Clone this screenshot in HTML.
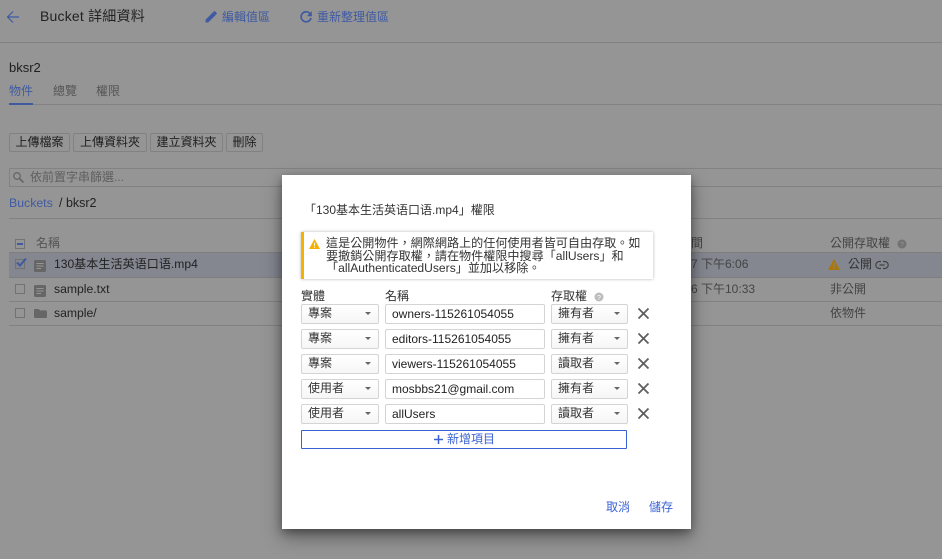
<!DOCTYPE html>
<html lang="zh-Hant">
<head>
<meta charset="utf-8">
<title>Bucket 詳細資料</title>
<style>
html,body{margin:0;padding:0}
body{width:942px;height:559px;overflow:hidden;position:relative;background:#959595;font-family:"Liberation Sans","Noto Sans CJK TC",sans-serif;font-size:12px;color:#222}
.bg{position:absolute;left:0;top:0;width:942px;height:559px;filter:blur(.35px)}
.a{position:absolute;white-space:nowrap}
.l{position:absolute;height:1px;background:#828282}
.b{position:absolute;top:133px;height:17px;border:1px solid #828282;border-radius:2px;text-align:center;line-height:17px;color:#1e1e1e;box-sizing:content-box}
.m{position:absolute;left:282px;top:175px;width:409px;height:354px;background:#fff;box-shadow:0 8px 18px rgba(0,0,0,.38),0 3px 8px rgba(0,0,0,.3)}
.s,.i{position:absolute;box-sizing:border-box;height:20px;border:1px solid #d4d4d4;border-radius:2px;color:#333;background:#fff}
.i{line-height:18px}
.s{line-height:16px;background:linear-gradient(#fff,#f6f6f6);padding-left:6px}
.i{padding-left:6px;left:103px;width:160px;color:#222}
.s:after{content:"";position:absolute;right:7px;top:7px;border:3px solid transparent;border-top:3px solid #666;border-bottom:0}
.e{left:19px;width:78px}
.r{left:269px;width:77px}
.cb{position:absolute;left:15px;width:10px;height:10px;box-sizing:border-box;border:1px solid #727272}
svg{position:absolute;display:block}
</style>
</head>
<body>
<div class="bg">
<svg style="left:5px;top:9px" width="16" height="16" viewBox="0 0 16 16"><path d="M14 8H2.500M8 2.500 2.500 8 8 13.500" fill="none" stroke="#3f5aa3" stroke-width="1.200"/></svg>
<div class="a" style="left:40px;top:8px;font-size:14px;line-height:17px;color:#222;letter-spacing:.2px">Bucket 詳細資料</div>
<svg style="left:204px;top:10px" width="14" height="14" viewBox="0 0 14 14"><path d="M1.500 12.500V9.800L9 2.300l2.700 2.700-7.500 7.500zM10 1.400c.3-.3.8-.3 1.100 0l1.500 1.500c.3.3.3.8 0 1.100L11.700 4.900 9.100 2.300z" fill="#3f5aa3"/></svg>
<div class="a" style="left:222px;top:9px;line-height:16px;color:#3f5aa3">編輯值區</div>
<svg style="left:299px;top:10px" width="14" height="14" viewBox="0 0 14 14"><path d="M11.300 4A5 5 0 1 0 12 8" fill="none" stroke="#3f5aa3" stroke-width="1.700"/><path d="M12.800 1.200V6.200H7.800z" fill="#3f5aa3"/></svg>
<div class="a" style="left:317px;top:9px;line-height:16px;color:#3f5aa3">重新整理值區</div>
<div class="l" style="left:0;top:42px;width:942px"></div>

<div class="a" style="left:9px;top:60px;line-height:16px;font-size:13px;color:#1e1e1e">bksr2</div>
<div class="a" style="left:9px;top:83px;line-height:16px;color:#3f5aa3">物件</div>
<div class="a" style="left:53px;top:83px;line-height:16px;color:#555">總覽</div>
<div class="a" style="left:96px;top:83px;line-height:16px;color:#555">權限</div>
<div class="l" style="left:9px;top:104px;width:933px"></div>
<div class="a" style="left:9px;top:103px;width:24px;height:2px;background:#3f5aa3"></div>

<div class="b" style="left:9px;width:59px">上傳檔案</div>
<div class="b" style="left:73px;width:72px">上傳資料夾</div>
<div class="b" style="left:150px;width:71px">建立資料夾</div>
<div class="b" style="left:226px;width:35px">刪除</div>

<div class="a" style="left:9px;top:168px;width:933px;height:17px;border:1px solid #828282;box-sizing:content-box"></div>
<svg style="left:12px;top:171px" width="13" height="13" viewBox="0 0 13 13"><circle cx="5" cy="5" r="3.300" fill="none" stroke="#666" stroke-width="1.300"/><path d="M7.500 7.500 11.500 11.500" stroke="#666" stroke-width="1.600"/></svg>
<div class="a" style="left:30px;top:169px;line-height:16px;color:#5f5f5f">依前置字串篩選...</div>

<div class="a" style="left:9px;top:195px;line-height:16px;font-size:12.300px;color:#3f5aa3">Buckets</div>
<div class="a" style="left:59px;top:195px;line-height:16px;font-size:12.500px;color:#222">/ bksr2</div>
<div class="l" style="left:9px;top:218px;width:933px"></div>

<div class="cb" style="top:239px"></div>
<div class="a" style="left:17px;top:243px;width:6px;height:2px;background:#3f5aa3"></div>
<div class="a" style="left:36px;top:235px;line-height:16px;color:#555">名稱</div>
<div class="a" style="left:830px;top:235px;line-height:16px;color:#444">公開存取權</div>
<svg style="left:897px;top:239px" width="10" height="10" viewBox="0 0 10 10"><circle cx="5" cy="5" r="4.500" fill="#727272"/><text x="5" y="8" font-size="7" text-anchor="middle" fill="#959595" font-family="Liberation Sans">?</text></svg>
<div class="a" style="left:691px;top:235px;line-height:16px;color:#444">間</div>

<div class="a" style="left:9px;top:252px;width:933px;height:26px;background:#848690;border-top:1px solid #7e7e7e;border-bottom:1px solid #7e7e7e;box-sizing:border-box"></div>
<div class="cb" style="top:259px"></div>
<svg style="left:15px;top:257px" width="13" height="12" viewBox="0 0 13 12"><path d="M2 5.500 5 8.500 11 1.500" fill="none" stroke="#3f5aa3" stroke-width="2"/></svg>
<svg style="left:34px;top:260px" width="12" height="12" viewBox="0 0 12 12"><rect width="12" height="12" rx="1.500" fill="#666"/><path d="M2.500 3.500h7M2.500 6h7M2.500 8.500h4.500" stroke="#959595"/></svg>
<div class="a" style="left:54px;top:256px;line-height:16px;font-size:12.100px;color:#222">130基本生活英语口语.mp4</div>
<div class="a" style="left:691px;top:256px;line-height:16px;color:#444">7 下午6:06</div>
<svg style="left:828px;top:259px" width="12" height="11" viewBox="0 0 12 11"><path d="M6 0 12 11H0z" fill="#a8780f"/><path d="M6 4v3.500M6 8.500v1.200" stroke="#848690"/></svg>
<div class="a" style="left:848px;top:256px;line-height:16px;color:#333">公開</div>
<svg style="left:875px;top:260px" width="14" height="10" viewBox="0 0 14 10"><path d="M6 1.500H4.300a3.500 3.500 0 0 0 0 7H6M8 1.500h1.700a3.500 3.500 0 0 1 0 7H8M4.500 5h5" fill="none" stroke="#444" stroke-width="1.200"/></svg>

<div class="cb" style="top:284px"></div>
<svg style="left:34px;top:285px" width="12" height="12" viewBox="0 0 12 12"><rect width="12" height="12" rx="1.500" fill="#666"/><path d="M2.500 3.500h7M2.500 6h7M2.500 8.500h4.500" stroke="#959595"/></svg>
<div class="a" style="left:54px;top:281px;line-height:16px;font-size:12.200px;color:#222">sample.txt</div>
<div class="a" style="left:691px;top:281px;line-height:16px;color:#444">6 下午10:33</div>
<div class="a" style="left:830px;top:281px;line-height:16px;color:#444">非公開</div>
<div class="l" style="left:9px;top:301px;width:933px"></div>

<div class="cb" style="top:308px"></div>
<svg style="left:34px;top:309px" width="13" height="9" viewBox="0 0 13 10" preserveAspectRatio="none"><path d="M0 1.200C0 .5.500 0 1.200 0H4.500L6 1.500H11.500C12.300 1.500 13 2.200 13 3V8.800C13 9.500 12.500 10 11.800 10H1.200C.5 10 0 9.500 0 8.800Z" fill="#666"/></svg>
<div class="a" style="left:54px;top:305px;line-height:16px;font-size:12.200px;color:#222">sample/</div>
<div class="a" style="left:830px;top:305px;line-height:16px;color:#444">依物件</div>
<div class="l" style="left:9px;top:325px;width:933px"></div>
</div>

<div class="m">
  <div class="a" style="left:22px;top:27px;line-height:16px;color:#333;font-family:'Liberation Sans','Noto Sans CJK SC',sans-serif">「130基本生活英语口语.mp4」權限</div>

  <div class="a" style="left:19px;top:57px;width:352px;height:47px;box-sizing:border-box;border-left:3px solid #f5b000;box-shadow:0 0 3px rgba(0,0,0,.3);background:#fff"></div>
  <svg style="left:27px;top:64px" width="11" height="10" viewBox="0 0 12 11"><path d="M6 0 12 11H0z" fill="#f5b000"/><path d="M6 4v3.500M6 8.500v1.200" stroke="#fff"/></svg>
  <div class="a" style="left:44px;top:62px;line-height:12.500px;font-size:12.100px;color:#333;font-family:'Liberation Sans','Noto Sans CJK SC',sans-serif">這是公開物件，網際網路上的任何使用者皆可自由存取。如<br>要撤銷公開存取權，請在物件權限中搜尋「allUsers」和<br>「allAuthenticatedUsers」並加以移除。</div>

  <div class="a" style="left:19px;top:113px;line-height:16px;color:#333">實體</div>
  <div class="a" style="left:103px;top:113px;line-height:16px;color:#333">名稱</div>
  <div class="a" style="left:269px;top:113px;line-height:16px;color:#333">存取權</div>
  <svg style="left:312px;top:117px" width="10" height="10" viewBox="0 0 10 10"><circle cx="5" cy="5" r="4.500" fill="#bdbdbd"/><text x="5" y="8" font-size="7" text-anchor="middle" fill="#fff" font-family="Liberation Sans">?</text></svg>

  <div class="s e" style="top:129px">專案</div><div class="i" style="top:129px">owners-115261054055</div><div class="s r" style="top:129px">擁有者</div>
  <svg style="left:355px;top:132px" width="13" height="13" viewBox="0 0 13 13"><path d="M1.500 1.500 11.500 11.500M11.500 1.500 1.500 11.500" stroke="#5f5f5f" stroke-width="1.800"/></svg>

  <div class="s e" style="top:154px">專案</div><div class="i" style="top:154px">editors-115261054055</div><div class="s r" style="top:154px">擁有者</div>
  <svg style="left:355px;top:157px" width="13" height="13" viewBox="0 0 13 13"><path d="M1.500 1.500 11.500 11.500M11.500 1.500 1.500 11.500" stroke="#5f5f5f" stroke-width="1.800"/></svg>

  <div class="s e" style="top:179px">專案</div><div class="i" style="top:179px">viewers-115261054055</div><div class="s r" style="top:179px">讀取者</div>
  <svg style="left:355px;top:182px" width="13" height="13" viewBox="0 0 13 13"><path d="M1.500 1.500 11.500 11.500M11.500 1.500 1.500 11.500" stroke="#5f5f5f" stroke-width="1.800"/></svg>

  <div class="s e" style="top:204px">使用者</div><div class="i" style="top:204px">mosbbs21@gmail.com</div><div class="s r" style="top:204px">擁有者</div>
  <svg style="left:355px;top:207px" width="13" height="13" viewBox="0 0 13 13"><path d="M1.500 1.500 11.500 11.500M11.500 1.500 1.500 11.500" stroke="#5f5f5f" stroke-width="1.800"/></svg>

  <div class="s e" style="top:229px">使用者</div><div class="i" style="top:229px">allUsers</div><div class="s r" style="top:229px">讀取者</div>
  <svg style="left:355px;top:232px" width="13" height="13" viewBox="0 0 13 13"><path d="M1.500 1.500 11.500 11.500M11.500 1.500 1.500 11.500" stroke="#5f5f5f" stroke-width="1.800"/></svg>

  <div class="a" style="left:19px;top:255px;width:326px;height:19px;box-sizing:border-box;border:1px solid #3b62d3;border-radius:1px"></div>
  <svg style="left:151px;top:259px" width="11" height="11" viewBox="0 0 11 11"><path d="M5.500 1v9M1 5.500h9" stroke="#3b62d3" stroke-width="1.500"/></svg>
  <div class="a" style="left:165px;top:256px;line-height:16px;color:#3b62d3">新增項目</div>

  <div class="a" style="left:324px;top:324px;line-height:16px;color:#3b62d3">取消</div>
  <div class="a" style="left:367px;top:324px;line-height:16px;color:#3b62d3">儲存</div>
</div>
</body>
</html>
